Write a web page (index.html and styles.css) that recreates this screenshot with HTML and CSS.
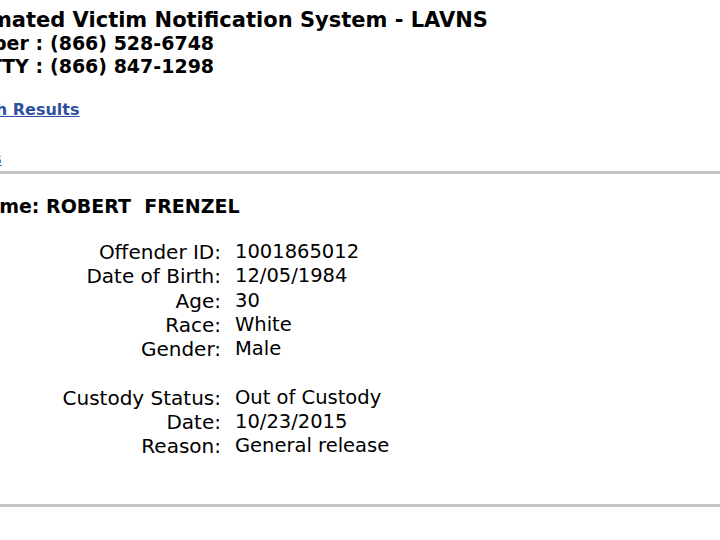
FILE: index.html
```html
<!DOCTYPE html>
<html>
<head>
    <link rel="stylesheet" href="styles.css">
</head>
<body>
    <div class="page">
        <div class="banner">
            <div class="system-title">Louisiana Automated Victim Notification System - LAVNS</div>
            <div class="phones">
                <span class="phone-label">Toll Free Number :</span>
                <span class="phone-number">(866) 528-6748</span>
                <span class="phone-label">TTY :</span>
                <span class="phone-number">(866) 847-1298</span>
            </div>
        </div>

        <div class="links">
            <a class="nav-link first" href="#">Return to Search Results</a>
            <a class="nav-link second" href="#">Offender Details</a>
        </div>

        <hr class="divider top">

        <div class="offender-name">Offender Name: ROBERT&nbsp; FRENZEL</div>

        <div class="details">
            <div class="label">Offender ID:</div>
            <div class="value">1001865012</div>
            <div class="label">Date of Birth:</div>
            <div class="value">12/05/1984</div>
            <div class="label">Age:</div>
            <div class="value">30</div>
            <div class="label">Race:</div>
            <div class="value">White</div>
            <div class="label">Gender:</div>
            <div class="value">Male</div>
            <div class="spacer"></div>
            <div class="label">Custody Status:</div>
            <div class="value">Out of Custody</div>
            <div class="label">Date:</div>
            <div class="value">10/23/2015</div>
            <div class="label">Reason:</div>
            <div class="value">General release</div>
        </div>

        <hr class="divider bottom">
    </div>
</body>
</html>
```

FILE: styles.css
```css
body {
    margin: 0;
    font-family: "DejaVu Sans", Verdana, sans-serif;
    background-color: #fff;
    color: #000;
    overflow: hidden;
}

.page {
    padding-top: 8px;
    margin-left: -186px; /* page is wider than the window, left part falls off */
}

.system-title {
    font-size: 21px;
    font-weight: bold;
    line-height: 24px;
    white-space: nowrap;
}

.phones {
    display: grid;
    grid-template-columns: 229px auto;
    column-gap: 7px;
    justify-content: start;
    font-size: 19px;
    font-weight: bold;
    line-height: 23px;
}

.phone-label {
    text-align: right;
}

.links {
    padding-left: 40px;
    font-size: 16px;
    font-weight: bold;
    line-height: 20px;
}

.nav-link {
    display: block;
    width: max-content;
    color: #2f4fa3;
    white-space: nowrap;
}

.nav-link.first {
    margin-top: 22px;
}

.nav-link.second {
    margin-top: 29px;
}

.divider {
    height: 3px;
    border: none;
    background-color: #c4c4c4;
    margin: 0;
}

.divider.top {
    margin-top: 2px;
}

.divider.bottom {
    margin-top: 45px;
}

.offender-name {
    margin-top: 21px;
    padding-left: 56px;
    font-size: 19px;
    font-weight: bold;
    line-height: 23px;
    white-space: nowrap;
}

.details {
    display: grid;
    grid-template-columns: 407px auto;
    column-gap: 14px;
    justify-content: start;
    margin-top: 22px;
    font-size: 19.5px;
    line-height: 24.3px;
}

.details .label {
    font-size: 20px;
    text-align: right;
}

.details .spacer {
    grid-column: 1 / 3;
    height: 24.3px;
}
```
